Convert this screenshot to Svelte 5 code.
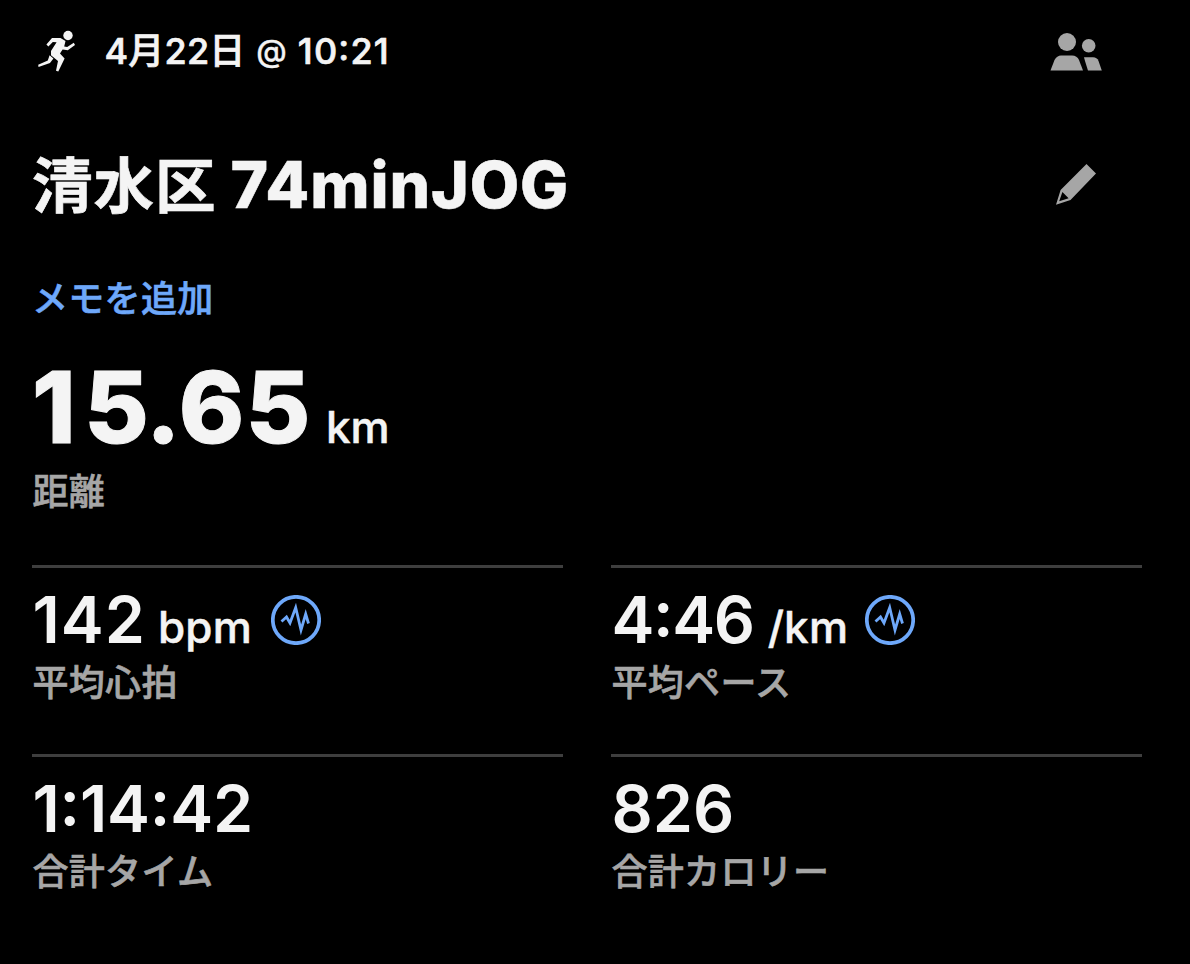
<script>
  const stats = [
    { id: 'hr', value: '142', unit: 'bpm', label: '平均心拍', info: true },
    { id: 'pace', value: '4:46', unit: '/km', label: '平均ペース', info: true },
    { id: 'time', value: '1:14:42', unit: '', label: '合計タイム', info: false },
    { id: 'cal', value: '826', unit: '', label: '合計カロリー', info: false },
  ];
</script>

<main>
  <header>
    <svg class="runner" viewBox="0 0 40 44" width="40" height="44">
      <circle cx="32" cy="5.5" r="4.7" />
      <path d="M16 8 L24.5 8 L29.5 11 L28.2 16.6 L31.2 17 L37.8 12.8 L39 15 L31.8 20.2 L26.6 19.5 L24 23.5 L28.6 28.4 L22.3 41.6 L20 40.8 L22 31 L15 25.2 L15 21 L20.6 12.3 L16.8 12 L12.4 16.4 L10.4 14.6 Z" />
      <path d="M13.6 25.3 L17.4 28.6 L14 33 L2.5 37 L2.2 34.8 L11.8 30.5 Z" />
    </svg>
    <span class="date">4月22日 <span class="at">@</span> <span class="clock">10:21</span></span>
    <svg class="people" viewBox="0 0 52 38" width="52" height="38">
      <circle cx="17" cy="9" r="9" />
      <path d="M0.5 37.5 L4.5 27 Q7 22.5 11 22.5 H22 Q27 22.5 29 27 L33 37.5 Z" />
      <circle cx="38.7" cy="12.7" r="6.8" />
      <path d="M34 24.3 H43 Q47 24.3 48.5 28 L51.8 37.5 H38 L35 28 Z" />
    </svg>
  </header>

  <div class="title">
    <h1><span class="ja">清水区</span> <span class="en">74minJOG</span></h1>
    <svg class="pencil" viewBox="0 0 40 42" width="40" height="42">
      <path fill-rule="evenodd" d="M30.5 0 L40 9.5 L14.5 36 L0 40.8 L4.6 26 Z M6.4 28 L3.2 37.3 L12.6 34.2 Z" />
    </svg>
  </div>

  <a class="memo" href="#memo">メモを追加</a>

  <section class="distance">
    <div class="big"><span class="num"><span class="one">1</span><span class="five">5</span><span class="dot">.</span>65</span><span class="unit">km</span></div>
    <div class="label">距離</div>
  </section>

  <section class="grid">
    {#each stats as s (s.id)}
      <div class="stat">
        <div class="line">
          <span class="value {s.id}">{s.value}</span>
          {#if s.unit}<span class="unit">{s.unit}</span>{/if}
          {#if s.info}
            <svg class="pulse" viewBox="0 0 50 50" width="50" height="50">
              <circle cx="25" cy="25" r="23.2" />
              <path d="M10.5 26.5 L15.5 22 L19 28 L24.7 12.5 L30 35 L34.7 19 L37.5 28.5" />
            </svg>
          {/if}
        </div>
        <div class="label">{s.label}</div>
      </div>
    {/each}
  </section>
</main>

<style>
  :global(body) { background: #000; }
  main {
    box-sizing: border-box;
    width: 1190px;
    height: 964px;
    padding: 28px 48px 0 32px;
    background: #000;
    color: #f4f4f4;
    font-family: Inter, "Noto Sans CJK JP", sans-serif;
    overflow: hidden;
    white-space: nowrap;
  }
  svg { display: block; flex: none; }
  header { display: flex; height: 50px; padding-left: 4px; }
  .runner { fill: #f4f4f4; margin-top: 2px; }
  .date { margin-left: 28.5px; font-size: 36px; font-weight: 500; line-height: 47px; letter-spacing: 0.2px; -webkit-text-stroke: 0.7px; }
  .at { display: inline-block; font-size: 31px; line-height: 40px; margin: 0 1px; vertical-align: 2px; -webkit-text-stroke: 0.3px; }
  .clock { letter-spacing: 1.2px; font-feature-settings: "calt" 1; }
  .people { margin: 5px 40px 0 auto; fill: #a6a6a6; }
  .title { display: flex; justify-content: space-between; height: 80px; margin-top: 67px; }
  h1 { margin: 0; font-size: 64px; font-weight: 800; line-height: 80px; }
  .ja { font-size: 60.5px; font-weight: 700; letter-spacing: 1px; -webkit-text-stroke: 0.7px; }
  .en { letter-spacing: 0.9px; -webkit-text-stroke: 0.5px; }
  .pencil { margin: 19px 46px 0 0; fill: #a6a6a6; }
  .memo { display: block; margin-top: 49px; height: 49px; line-height: 50px; font-size: 36px; font-weight: 500; letter-spacing: 0.3px; color: #6ea8fa; text-decoration: none; -webkit-text-stroke: 0.6px; }
  .distance { height: 208px; margin-top: 34px; }
  .big { display: flex; align-items: baseline; height: 110px; line-height: 100px; }
  .num { font-size: 99px; font-weight: 800; letter-spacing: 1.6px; -webkit-text-stroke: 1px; }
  .one { letter-spacing: 8.5px; }
  .five { letter-spacing: -3px; }
  .dot { letter-spacing: -2px; }
  .unit { font-size: 44px; font-weight: 500; margin-left: 14px; -webkit-text-stroke: 0.5px; }
  .label { color: #a6a6a6; font-size: 36px; font-weight: 500; line-height: 50px; letter-spacing: 0.3px; padding-left: 0.5px; -webkit-text-stroke: 0.6px; }
  .grid { display: grid; grid-template-columns: 531px 531px; column-gap: 48px; grid-auto-rows: 189px; }
  .stat { border-top: 3px solid #3e3e3e; padding-top: 22px; }
  .line { display: flex; align-items: baseline; height: 68px; line-height: 60px; }
  .value { font-size: 64.5px; font-weight: 600; padding-left: 0.5px; font-feature-settings: "calt" 1; }
  .line .unit { margin-left: 12px; letter-spacing: 0.2px; }
  .hr { letter-spacing: 1px; }
  .time { letter-spacing: -0.2px; }
  .pace { letter-spacing: -1.4px; }
  .pace + .unit { margin-left: 14px; }
  .pulse { align-self: flex-start; margin: 4.5px 0 0 18.5px; fill: none; stroke: #6ea8fa; stroke-width: 3.7; }
  .pace ~ .pulse { margin-left: 17px; }
  .pulse path { stroke-width: 2.8; }
</style>
